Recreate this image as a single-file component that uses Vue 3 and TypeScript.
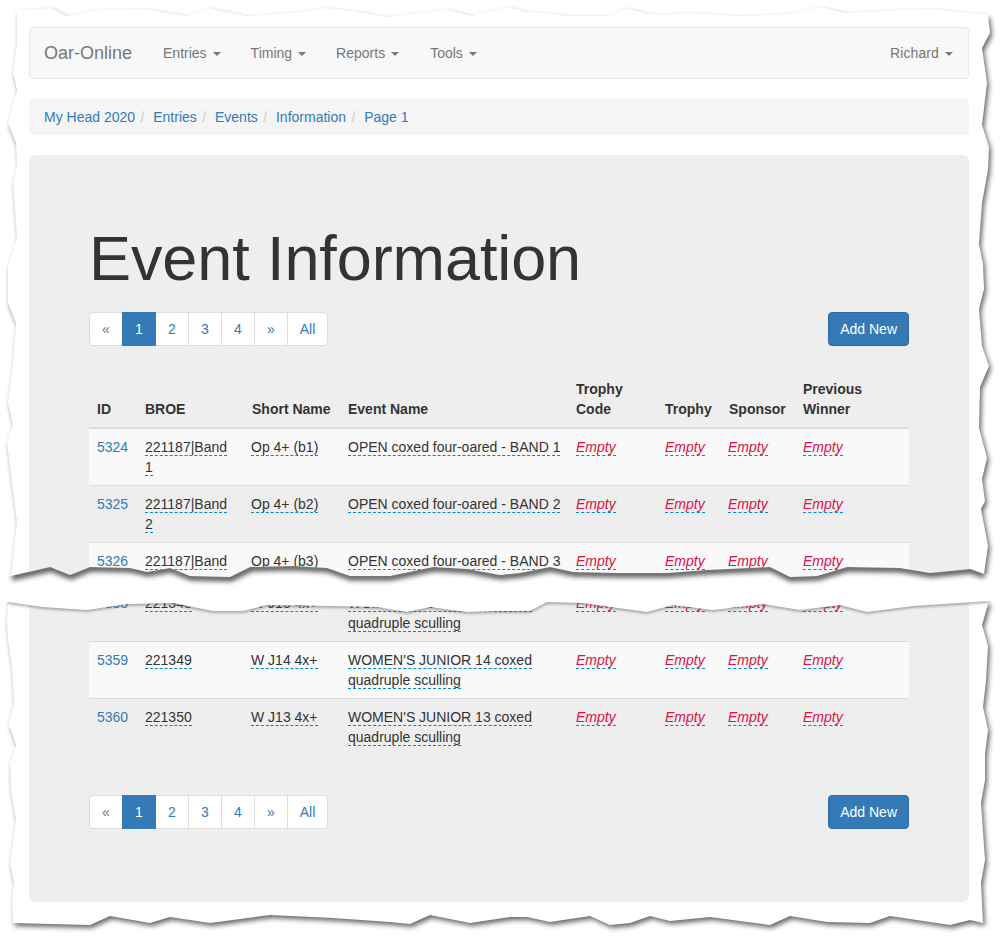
<script setup lang="ts">
type Pt = [number, number]
interface Row {
  id: number
  broe: string
  short: string
  name: string
}

const topEdge: Pt[] = [[17,11],[50,8],[67,16],[100,10],[143,9],[187,16],[207,8],[247,16],[293,13],[327,8],[353,11],[387,17],[447,10],[473,16],[507,7],[527,12],[547,13],[567,16],[607,16],[627,8],[647,14],[667,15],[687,13],[720,15],[743,16],[787,14],[820,7],[847,13],[900,10],[933,9],[988,15]]
const rightUpper: Pt[] = [[990,33],[982,48],[987,83],[982,125],[989,147],[988,170],[982,203],[979,244],[983,264],[984,289],[979,309],[982,346],[989,366],[980,387],[979,428],[987,458],[982,479],[985,501],[981,509],[988,546]]
const upperTear: Pt[] = [[11,576],[50,567],[70,575],[90,567],[130,568],[147,572],[170,568],[190,576],[230,577],[250,567],[293,566],[327,568],[350,576],[390,576],[433,567],[467,569],[500,575],[520,573],[550,567],[573,572],[617,573],[667,573],[707,570],[770,567],[790,577],[817,576],[847,567],[900,568],[930,573],[970,569],[984,574]]
const leftUpper: Pt[] = [[17,523],[7,443],[13,425],[8,403],[13,363],[16,323],[8,303],[8,267],[17,237],[13,183],[17,167],[16,143],[8,123],[17,90],[13,73],[17,43]]
const lowerTear: Pt[] = [[8,602],[43,607],[87,610],[127,604],[173,603],[213,611],[243,611],[267,605],[333,606],[377,607],[407,612],[430,607],[467,612],[500,611],[530,611],[547,602],[583,603],[647,612],[673,605],[713,610],[763,604],[800,610],[840,605],[867,612],[913,606],[989,601]]
const rightLower: Pt[] = [[982,625],[988,646],[986,681],[983,707],[988,730],[985,754],[985,780],[981,803],[985,860],[981,883],[983,923]]
const bottomEdge: Pt[] = [[970,920],[950,925],[890,916],[870,923],[827,922],[790,916],[770,925],[710,917],[670,921],[650,916],[630,923],[610,925],[590,916],[550,922],[527,917],[510,917],[470,923],[430,915],[410,924],[390,922],[333,918],[270,915],[210,923],[170,917],[150,923],[110,916],[90,925],[13,923]]
const leftLower: Pt[] = [[12,903],[14,883],[10,863],[16,820],[11,790],[10,763],[16,745],[9,725],[14,703],[12,667],[8,640],[7,623]]

const toPoints = (pts: Pt[]): string => pts.map((p) => p.join(',')).join(' ')

const upperSheet = toPoints([...topEdge, ...rightUpper, ...[...upperTear].reverse(), ...leftUpper])
const lowerSheet = toPoints([...lowerTear, ...rightLower, ...bottomEdge, ...leftLower])
const band = toPoints([[-6, 576], ...upperTear, [1007, 574], [1007, 601], ...[...lowerTear].reverse(), [-6, 602]])
const upperLine = toPoints(upperTear)
const lowerLine = toPoints(lowerTear)

const menus = ['Entries', 'Timing', 'Reports', 'Tools']
const crumbs = ['My Head 2020', 'Entries', 'Events', 'Information', 'Page 1']
const pages = ['1', '2', '3', '4']
const empties = [0, 1, 2, 3]

const firstRows: Row[] = [
  { id: 5324, broe: '221187|Band 1', short: 'Op 4+ (b1)', name: 'OPEN coxed four-oared - BAND 1' },
  { id: 5325, broe: '221187|Band 2', short: 'Op 4+ (b2)', name: 'OPEN coxed four-oared - BAND 2' },
  { id: 5326, broe: '221187|Band 3', short: 'Op 4+ (b3)', name: 'OPEN coxed four-oared - BAND 3' }
]
const lastRows: Row[] = [
  { id: 5358, broe: '221348', short: 'W J15 4x+', name: "WOMEN'S JUNIOR 15 coxed quadruple sculling" },
  { id: 5359, broe: '221349', short: 'W J14 4x+', name: "WOMEN'S JUNIOR 14 coxed quadruple sculling" },
  { id: 5360, broe: '221350', short: 'W J13 4x+', name: "WOMEN'S JUNIOR 13 coxed quadruple sculling" }
]
const columnWidths = [48, 107, 96, 228, 89, 64, 74, 114]
</script>

<template>
  <div class="page">
    <svg class="paper" width="1001" height="937" viewBox="0 0 1001 937" aria-hidden="true">
      <polygon class="sheet" :points="upperSheet" />
      <polygon class="sheet" :points="lowerSheet" />
    </svg>

    <div class="content">
      <nav class="navbar">
        <div class="nav-left">
          <a class="brand">Oar-Online</a>
          <a v-for="m in menus" :key="m" class="nav-link">{{ m }}<span class="caret"></span></a>
        </div>
        <a class="nav-link user">Richard<span class="caret"></span></a>
      </nav>

      <ol class="breadcrumb">
        <li v-for="c in crumbs" :key="c"><a>{{ c }}</a></li>
      </ol>

      <main class="jumbotron">
        <h1>Event Information</h1>

        <div class="toolbar">
          <ul class="pagination">
            <li class="disabled"><a>«</a></li>
            <li v-for="p in pages" :key="p" :class="{ active: p === '1' }"><a>{{ p }}</a></li>
            <li><a>»</a></li>
            <li><a>All</a></li>
          </ul>
          <button class="btn" type="button">Add New</button>
        </div>

        <div class="table-cut">
          <table>
            <colgroup><col v-for="(w, i) in columnWidths" :key="i" :style="{ width: w + 'px' }" /></colgroup>
            <thead>
              <tr>
                <th>ID</th>
                <th>BROE</th>
                <th>Short Name</th>
                <th>Event Name</th>
                <th>Trophy Code</th>
                <th>Trophy</th>
                <th>Sponsor</th>
                <th>Previous Winner</th>
              </tr>
            </thead>
            <tbody>
              <tr v-for="r in firstRows" :key="r.id">
                <td><a class="id">{{ r.id }}</a></td>
                <td><a class="editable">{{ r.broe }}</a></td>
                <td><a class="editable">{{ r.short }}</a></td>
                <td><a class="editable">{{ r.name }}</a></td>
                <td v-for="e in empties" :key="e"><a class="editable empty">Empty</a></td>
              </tr>
            </tbody>
          </table>
        </div>

        <table class="table-rest">
          <colgroup><col v-for="(w, i) in columnWidths" :key="i" :style="{ width: w + 'px' }" /></colgroup>
          <tbody>
            <tr v-for="r in lastRows" :key="r.id">
              <td><a class="id">{{ r.id }}</a></td>
              <td><a class="editable">{{ r.broe }}</a></td>
              <td><a class="editable">{{ r.short }}</a></td>
              <td><a class="editable">{{ r.name }}</a></td>
              <td v-for="e in empties" :key="e"><a class="editable empty">Empty</a></td>
            </tr>
          </tbody>
        </table>

        <div class="toolbar bottom">
          <ul class="pagination">
            <li class="disabled"><a>«</a></li>
            <li v-for="p in pages" :key="p" :class="{ active: p === '1' }"><a>{{ p }}</a></li>
            <li><a>»</a></li>
            <li><a>All</a></li>
          </ul>
          <button class="btn" type="button">Add New</button>
        </div>
      </main>
    </div>

    <svg class="tear" width="1001" height="937" viewBox="0 0 1001 937" aria-hidden="true">
      <defs>
        <clipPath id="band-clip"><polygon :points="band" /></clipPath>
      </defs>
      <polyline class="lower-shadow" :points="lowerLine" />
      <polygon class="band" :points="band" />
      <g clip-path="url(#band-clip)">
        <polyline class="upper-shadow" :points="upperLine" />
      </g>
    </svg>
  </div>
</template>

<style>
html,
body {
  margin: 0;
  background: #fff;
}
</style>

<style scoped>
* {
  box-sizing: border-box;
}
.page {
  position: relative;
  width: 1001px;
  height: 937px;
  overflow: hidden;
  background: #fff;
  font-family: "Liberation Sans", Arial, sans-serif;
  font-size: 14px;
  line-height: 20px;
  color: #333;
}
.paper,
.tear {
  position: absolute;
  left: 0;
  top: 0;
  pointer-events: none;
}
.paper {
  z-index: 0;
}
.tear {
  z-index: 2;
}
.sheet {
  fill: #fff;
  filter: drop-shadow(2px 3px 2.5px rgba(0, 0, 0, 0.6));
}
.band {
  fill: #fff;
}
.lower-shadow {
  fill: none;
  stroke: #555;
  stroke-width: 3;
  opacity: 0.6;
  filter: blur(1.5px);
}
.upper-shadow {
  fill: none;
  stroke: #222;
  stroke-width: 7;
  opacity: 0.75;
  filter: blur(2.5px);
  transform: translate(1px, 1px);
}
.content {
  position: relative;
  z-index: 1;
  padding: 27px 32px 0 29px;
}
.navbar {
  display: flex;
  justify-content: space-between;
  align-items: stretch;
  height: 52px;
  margin-bottom: 20px;
  background: #f8f8f8;
  border: 1px solid #e7e7e7;
  border-radius: 4px;
}
.nav-left {
  display: flex;
}
.brand {
  padding: 15px 16px 15px 14px;
  font-size: 18px;
  color: #777;
}
.nav-link {
  padding: 15px;
  color: #777;
}
.nav-left .nav-link:last-child {
  margin-left: 1px;
}
.nav-link.user {
  letter-spacing: 0.1px;
}
.caret {
  display: inline-block;
  width: 0;
  height: 0;
  margin-left: 6px;
  vertical-align: middle;
  border-top: 4px solid;
  border-right: 4px solid transparent;
  border-left: 4px solid transparent;
}
.breadcrumb {
  display: flex;
  height: 36px;
  margin: 0 0 20px;
  padding: 8px 15px;
  list-style: none;
  background: #f5f5f5;
  border-radius: 4px;
}
.breadcrumb li + li {
  margin-left: 0.4px;
}
.breadcrumb li + li::before {
  content: "/\00a0";
  padding: 0 5px;
  color: #ccc;
}
.breadcrumb a {
  color: #337ab7;
}
.jumbotron {
  height: 747px;
  padding: 48px 60px;
  background: #eee;
  border-radius: 6px;
}
h1 {
  margin: 21px 0 19px;
  font-size: 63px;
  font-weight: 500;
  line-height: 69.3px;
  letter-spacing: -0.1px;
  color: #333;
}
.toolbar {
  display: flex;
  justify-content: space-between;
  align-items: flex-start;
  height: 34px;
  margin-bottom: 25px;
}
.toolbar.bottom {
  margin: 40px 0 0;
}
.pagination {
  display: flex;
  margin: 0;
  padding: 0;
  list-style: none;
}
.pagination li + li {
  margin-left: -1px;
}
.pagination a {
  display: block;
  min-width: 34px;
  height: 34px;
  padding: 6px 12px;
  text-align: center;
  color: #337ab7;
  background: #fff;
  border: 1px solid #ddd;
}
.pagination li:first-child a {
  border-radius: 4px 0 0 4px;
}
.pagination li:last-child a {
  width: 41px;
  padding: 6px 0;
  border-radius: 0 4px 4px 0;
}
.pagination .disabled a {
  color: #777;
}
.pagination .active {
  position: relative;
  z-index: 1;
}
.pagination .active a {
  color: #fff;
  background: #337ab7;
  border-color: #337ab7;
}
.btn {
  height: 34px;
  padding: 6px 11px;
  font: inherit;
  color: #fff;
  background: #337ab7;
  border: 1px solid #2e6da4;
  border-radius: 4px;
}
.table-cut {
  height: 213px;
  overflow: hidden;
}
table {
  width: 820px;
  table-layout: fixed;
  border-collapse: collapse;
  border-spacing: 0;
}
th {
  padding: 8px;
  text-align: left;
  vertical-align: bottom;
  font-weight: 700;
  border-bottom: 2px solid #ddd;
}
td {
  padding: 8px;
  vertical-align: top;
  border-top: 1px solid #ddd;
}
td:nth-child(3),
td:nth-child(7) {
  padding-left: 7px;
}
td:nth-child(4) {
  padding-right: 3px;
}
thead + tbody tr:first-child td {
  border-top: 0;
}
.table-cut tbody tr:nth-child(odd) {
  background: #f9f9f9;
}
.table-rest tbody tr:nth-child(even) {
  background: #f9f9f9;
}
.id {
  color: #337ab7;
}
.editable {
  color: #333;
  border-bottom: 1px dashed #08c;
}
.empty {
  font-style: italic;
  color: #d14;
}
</style>
